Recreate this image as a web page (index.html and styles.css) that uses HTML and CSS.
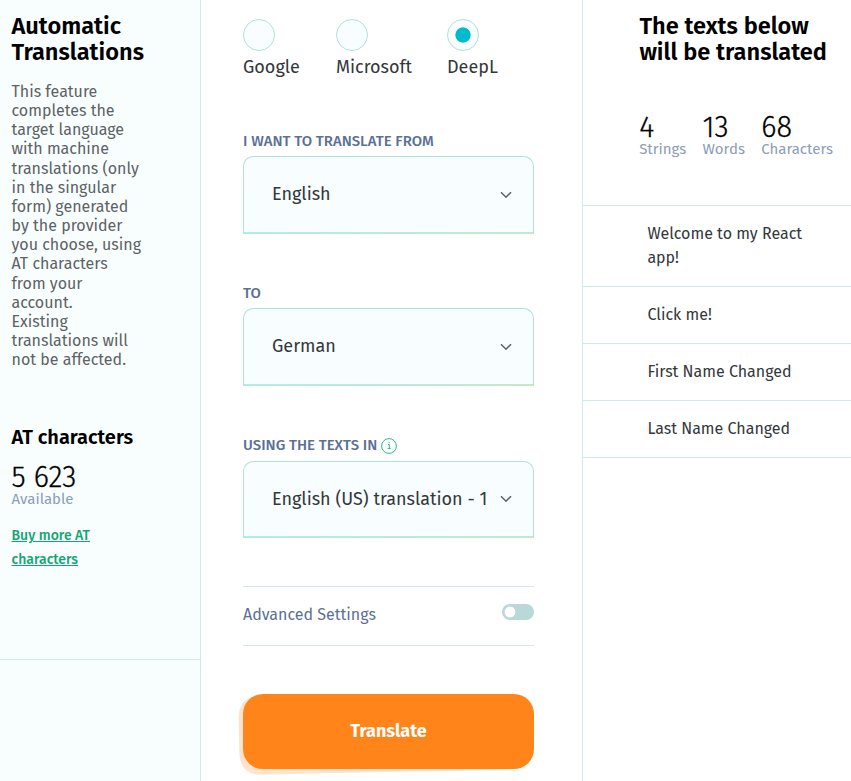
FILE: index.html
```
<!DOCTYPE html>
<html lang="en">
<head>
<meta charset="utf-8">
<title>Automatic Translations</title>
<link rel="stylesheet" href="styles.css">
</head>
<body>
<div class="layout">
  <aside class="sidebar">
    <section class="intro">
      <h1 class="title">Automatic<br>Translations</h1>
      <p class="description">This feature<br>completes the<br>target language<br>with machine<br>translations (only<br>in the singular<br>form) generated<br>by the provider<br>you choose, using<br>AT characters<br>from your<br>account.<br>Existing<br>translations will<br>not be affected.</p>
      <h2 class="subtitle">AT characters</h2>
      <div class="stat"><span class="number">5 623</span><span class="caption">Available</span></div>
      <a class="buy" href="#">Buy more AT<br>characters</a>
    </section>
  </aside>
  <main class="form">
    <div class="providers">
      <label class="provider"><i class="radio"></i><span>Google</span></label>
      <label class="provider microsoft"><i class="radio"></i><span>Microsoft</span></label>
      <label class="provider"><i class="radio checked"></i><span>DeepL</span></label>
    </div>
    <div class="field"><div class="label">I WANT TO TRANSLATE FROM</div>
      <div class="select"><span>English</span><svg class="chevron" viewBox="0 0 12 8"><path d="M1 1.2 6 6.2 11 1.2"/></svg></div></div>
    <div class="field"><div class="label">TO</div>
      <div class="select"><span>German</span><svg class="chevron" viewBox="0 0 12 8"><path d="M1 1.2 6 6.2 11 1.2"/></svg></div></div>
    <div class="field source"><div class="label">USING THE TEXTS IN<svg class="info" viewBox="0 0 16 16"><circle cx="8" cy="8" r="7.4"/><path d="M7 6.500h1.300v4M6.700 10.600h3M7.600 4.700h1.200"/></svg></div>
      <div class="select"><span>English (US) translation - 1</span><svg class="chevron" viewBox="0 0 12 8"><path d="M1 1.2 6 6.2 11 1.2"/></svg></div></div>
    <div class="advanced"><span>Advanced Settings</span><i class="toggle"></i></div>
    <div class="action">
      <svg class="shadow" viewBox="0 0 300 85"><path d="M22 4H280Q296 5 294 25V55Q293 75 275 76.500L26 81.500Q6 82 4.500 62L3.500 25Q4 4 22 4Z"/></svg>
      <button class="translate">Translate</button>
    </div>
  </main>
  <section class="preview">
    <h1 class="title">The texts below<br>will be translated</h1>
    <div class="stats">
      <div class="stat"><span class="number">4</span><span class="caption">Strings</span></div>
      <div class="stat"><span class="number">13</span><span class="caption">Words</span></div>
      <div class="stat"><span class="number">68</span><span class="caption">Characters</span></div>
    </div>
    <ul class="texts">
      <li>Welcome to my React<br>app!</li>
      <li>Click me!</li>
      <li>First Name Changed</li>
      <li>Last Name Changed</li>
    </ul>
  </section>
</div>
</body>
</html>
```
FILE: styles.css
```
* { box-sizing: border-box; }
body { margin: 0; font-family: "Fira Sans", "Noto Sans", sans-serif; font-size: 16px; color: #33383b; background: #fff; }
h1, h2, p, ul { margin: 0; padding: 0; }
.layout { display: grid; grid-template-columns: 201px 381px 269px; height: 781px; overflow: hidden; }
.sidebar { background: #f8fefe; border-right: 1px solid #d4e8ec; }
.intro { height: 660px; padding: 13px 0 0 11.5px; border-bottom: 1px solid #d4e8ec; }
.title { font-size: 23.6px; line-height: 26px; font-weight: 600; color: #000; white-space: nowrap; }
.description { margin-top: 17px; font-size: 16px; line-height: 19.15px; color: #5e6265; white-space: nowrap; }
.subtitle { margin-top: 55px; font-size: 20px; line-height: 26px; font-weight: 600; color: #000; }
.stat { display: flex; flex-direction: column; align-items: flex-start; }
.number { margin-bottom: -2px; font-size: 29px; line-height: 30px; color: #000; font-weight: 300; -webkit-text-stroke: 0.3px #000; }
.caption { font-size: 15px; line-height: 16px; color: #8c9db9; }
.intro .stat { margin-top: 13px; }
.buy { display: block; margin-top: 17px; font-size: 14px; line-height: 24px; font-weight: 500; color: #13a574; }
.form { padding: 19px 48px 0 42px; }
.providers { display: flex; height: 112px; }
.provider { display: flex; flex-direction: column; flex: none; width: 93px; font-size: 18px; line-height: 32px; align-items: flex-start; }
.provider.microsoft { width: 111px; }
.radio { width: 32px; height: 32px; border: 1px solid #b3e1d5; border-radius: 50%; background: #f8fdff; }
.checked { background: radial-gradient(circle, #00bbcd 7.2px, #f8fdff 8px); }
.field { height: 152px; }
.label { display: flex; height: 25px; line-height: 21px; font-size: 15px; font-weight: 500; color: #5b7197; }
.info { width: 16px; height: 16px; margin: 3px 0 0 4px; fill: none; stroke: #2fb78c; stroke-width: 1; }
.select { display: flex; align-items: center; justify-content: space-between; height: 78px; padding: 0 21px 2px 28px; border: 1px solid #b3e1d5; border-bottom: 0; border-radius: 10px 10px 0 0; background: linear-gradient(90deg, #aeeeea, #c5e9c9) bottom / 100% 2px no-repeat, #f8fdff; font-size: 18px; white-space: nowrap; }
.select span { width: 214px; overflow: hidden; margin-top: -2px; }
.source .label { height: 26px; }
.source .select { height: 77px; }
.source .select span { margin-top: 0; }
.chevron { width: 12px; height: 8px; fill: none; stroke: #5e6265; stroke-width: 1.6; }
.advanced { display: flex; justify-content: space-between; height: 60px; margin-top: -1px; padding-top: 17px; border: solid #d4e8ec; border-width: 1px 0; color: #5b7197; line-height: 22px; }
.toggle { width: 32px; height: 16px; border-radius: 8px; background: radial-gradient(circle at 8px 8px, #fff 5px, #b9d8d8 5.8px); }
.action { position: relative; margin-top: 48px; }
.shadow { position: absolute; left: -8px; top: -1px; width: 300px; height: 85px; fill: #ffe3cc; }
.translate { display: block; position: relative; width: 291px; height: 75px; padding: 0 0 2px; border: 0; border-radius: 20px; background: #ff851b; color: #fff; font: inherit; font-size: 18px; font-weight: 700; }
.preview { padding-top: 13px; border-left: 1px solid #d4e8ec; }
.preview .title { margin-left: 56.4px; }
.stats { display: flex; gap: 16.3px; margin: 48px 0 0 56.2px; height: 92px; }
.texts { list-style: none; border-top: 1px solid #d4e8ec; }
.texts li { padding: 16px 0 16px 64.4px; line-height: 24px; border-bottom: 1px solid #d4e8ec; }
```
